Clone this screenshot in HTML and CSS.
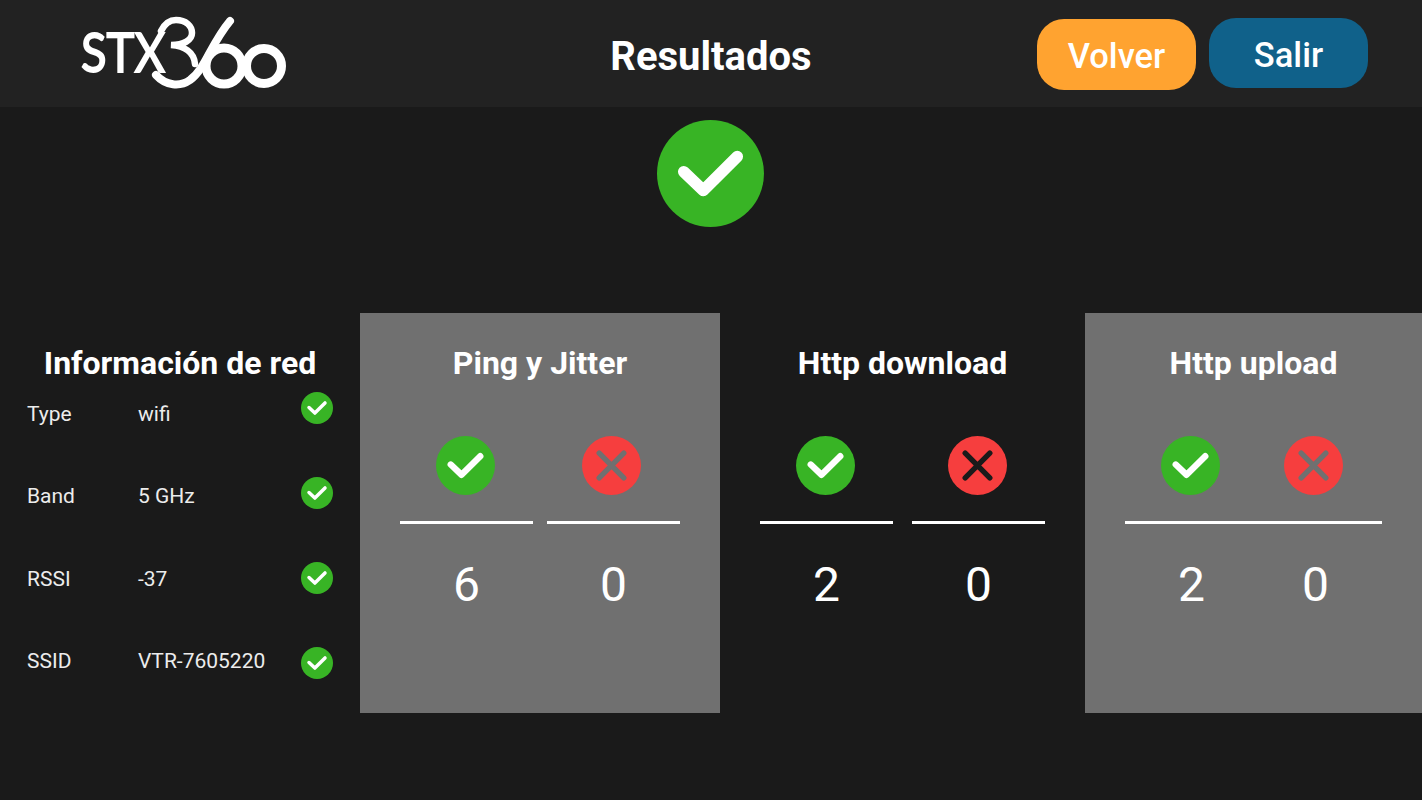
FILE: index.html
```html
<!DOCTYPE html>
<html lang="es">
<head>
    <meta charset="UTF-8" />
    <meta name="viewport" content="width=device-width, initial-scale=1" />
    <title>Resultados</title>
    <link rel="stylesheet" href="styles.css">
</head>
<body>
    <svg class="icon-defs" aria-hidden="true">
        <symbol id="icon-ok" viewBox="0 0 60 60">
            <circle class="ok-disc" cx="30" cy="30" r="30" />
            <path class="ok-mark" d="M15 29 L26 39.5 L45 20.5" />
        </symbol>
        <symbol id="icon-fail" viewBox="0 0 60 60">
            <circle class="fail-disc" cx="30" cy="30" r="30" />
            <path class="fail-mark" d="M17.5 17.5 L42.5 42.5 M42.5 17.5 L17.5 42.5" />
        </symbol>
    </svg>

    <header class="topbar">
        <div class="logo">
            <svg class="logo-svg" viewBox="82 15 206 75" role="img" aria-label="STX360">
                <text class="logo-text" x="83" y="72" textLength="84" lengthAdjust="spacingAndGlyphs">STX</text>
                <path class="logo-stroke" d="M163 31 C167 23 173 20 178 20 C188 20 194 26 194 33 C194 40 186 45 173 45 C186 46 196 52 197 64" />
                <path class="logo-swoosh" d="M158 75 C168 86 182 87 192 80 C208 68 212 45 232 21" />
                <circle class="logo-ring" cx="226" cy="66" r="18" />
                <circle class="logo-ring" cx="266" cy="66" r="17.5" />
            </svg>
        </div>
        <h1 class="page-title">Resultados</h1>
        <div class="actions">
            <button class="btn btn-volver">Volver</button>
            <button class="btn btn-salir">Salir</button>
        </div>
    </header>

    <main>
        <div class="status">
            <svg class="status-icon"><use href="#icon-ok" /></svg>
        </div>

        <section class="panels">
            <div class="panel-info">
                <h2 class="panel-title">Información de red</h2>
                <div class="info-body">
                    <div class="info-rows">
                        <div class="info-row"><span class="info-key">Type</span><span>wifi</span></div>
                        <div class="info-row"><span class="info-key">Band</span><span>5 GHz</span></div>
                        <div class="info-row"><span class="info-key">RSSI</span><span>-37</span></div>
                        <div class="info-row"><span class="info-key">SSID</span><span>VTR-7605220</span></div>
                    </div>
                    <div class="info-checks">
                        <svg class="info-check"><use href="#icon-ok" /></svg>
                        <svg class="info-check"><use href="#icon-ok" /></svg>
                        <svg class="info-check"><use href="#icon-ok" /></svg>
                        <svg class="info-check"><use href="#icon-ok" /></svg>
                    </div>
                </div>
            </div>

            <div class="panel panel-grey">
                <h2 class="panel-title">Ping y Jitter</h2>
                <div class="stats">
                    <div class="stat">
                        <svg class="stat-icon"><use href="#icon-ok" /></svg>
                        <div class="stat-line"></div>
                        <div class="stat-num">6</div>
                    </div>
                    <div class="stat">
                        <svg class="stat-icon"><use href="#icon-fail" /></svg>
                        <div class="stat-line"></div>
                        <div class="stat-num">0</div>
                    </div>
                </div>
            </div>

            <div class="panel">
                <h2 class="panel-title">Http download</h2>
                <div class="stats stats-wide">
                    <div class="stat">
                        <svg class="stat-icon"><use href="#icon-ok" /></svg>
                        <div class="stat-line"></div>
                        <div class="stat-num">2</div>
                    </div>
                    <div class="stat">
                        <svg class="stat-icon"><use href="#icon-fail" /></svg>
                        <div class="stat-line"></div>
                        <div class="stat-num">0</div>
                    </div>
                </div>
            </div>

            <div class="panel panel-grey">
                <h2 class="panel-title">Http upload</h2>
                <div class="stats stats-joined">
                    <div class="stat">
                        <svg class="stat-icon"><use href="#icon-ok" /></svg>
                        <div class="stat-line"></div>
                        <div class="stat-num">2</div>
                    </div>
                    <div class="stat">
                        <svg class="stat-icon"><use href="#icon-fail" /></svg>
                        <div class="stat-line"></div>
                        <div class="stat-num">0</div>
                    </div>
                </div>
            </div>
        </section>
    </main>
</body>
</html>
```

FILE: styles.css
```css
body {
    margin: 0;
    height: 800px;
    overflow: hidden;
    background: #1a1a1a;
    color: #fff;
    font-family: Roboto, "Liberation Sans", sans-serif;
}
.icon-defs {
    display: none;
}
.ok-disc { fill: #38b425; }
.ok-mark {
    fill: none;
    stroke: #fff;
    stroke-width: 6.5;
    stroke-linecap: round;
    stroke-linejoin: round;
}
.fail-disc { fill: #f63e3e; }
.fail-mark {
    fill: none;
    stroke: var(--panel-bg, #1a1a1a);
    stroke-width: 5.5;
    stroke-linecap: round;
}

/* barra superior */
.topbar {
    display: grid;
    grid-template-columns: 1fr auto 1fr;
    align-items: center;
    height: 107px;
    padding: 0 54px;
    background: #222222;
}
.logo {
    display: flex;
    margin-left: 26px;
    padding-bottom: 2px;
}
.logo-svg {
    width: 206px;
    height: 75px;
}
.logo-text {
    fill: #fff;
    stroke: #fff;
    stroke-width: 1.8;
    font-family: Lato, sans-serif;
    font-size: 54px;
}
.logo-stroke {
    fill: none;
    stroke: #fff;
    stroke-width: 6.5;
    stroke-linecap: round;
}
.logo-swoosh {
    fill: none;
    stroke: #fff;
    stroke-width: 8;
    stroke-linecap: round;
}
.logo-ring {
    fill: none;
    stroke: #fff;
    stroke-width: 9;
}
.page-title {
    margin: 0;
    padding-top: 6px;
    font-size: 40px;
    font-weight: 700;
    line-height: 47px;
}
.actions {
    display: flex;
    justify-content: flex-end;
    align-items: flex-start;
    gap: 13px;
    height: 72px;
}
.btn {
    width: 159px;
    height: 70px;
    padding: 4px 0 0;
    border: none;
    border-radius: 27px;
    color: #fff;
    font-family: inherit;
    font-size: 34.5px;
    font-weight: 500;
}
.btn-volver {
    height: 71px;
    margin-top: 1px;
    background: #ffa330;
}
.btn-salir {
    background: #10618a;
}

/* contenido */
.status {
    display: flex;
    justify-content: center;
    padding: 13px 1px 0 0;
}
.status-icon {
    width: 107px;
    height: 107px;
}
.panels {
    display: grid;
    grid-template-columns: 360px 360px 365px 337px;
    height: 400px;
    margin-top: 86px;
}
.panel-title {
    margin: 0;
    font-size: 32px;
    font-weight: 700;
    line-height: 36px;
    text-align: center;
}
.panel-info {
    padding-top: 32px;
}
.panel {
    display: flex;
    flex-direction: column;
    padding: 32px 40px 0;
}
.panel-grey {
    --panel-bg: #707070;
    background: #707070;
}
.info-body {
    display: flex;
    justify-content: space-between;
    padding: 0 27px;
}
.info-rows {
    display: flex;
    flex-direction: column;
    gap: 58px;
    padding-top: 21px;
    font-size: 21px;
    line-height: 24.4px;
    color: #ececec;
}
.info-row {
    display: flex;
}
.info-key {
    width: 111px;
}
.info-checks {
    display: flex;
    flex-direction: column;
    gap: 53px;
    margin-top: 11px;
}
.info-check {
    display: block;
    width: 32px;
    height: 32px;
}
.stats {
    display: flex;
    justify-content: space-between;
    margin-top: 55px;
}
.stat {
    display: flex;
    flex-direction: column;
    align-items: center;
    width: 133px;
}
.stats-joined .stat + .stat {
    margin-left: -9px;
}
.stat-icon {
    width: 59px;
    height: 59px;
    margin-right: 2px;
}
.panel-grey .stat + .stat .stat-icon {
    margin-right: 4px;
}
.stat-line {
    align-self: stretch;
    height: 3px;
    margin-top: 26px;
    background: #fff;
}
.stat-num {
    margin-top: 34px;
    font-size: 48px;
    line-height: 54px;
}
```
